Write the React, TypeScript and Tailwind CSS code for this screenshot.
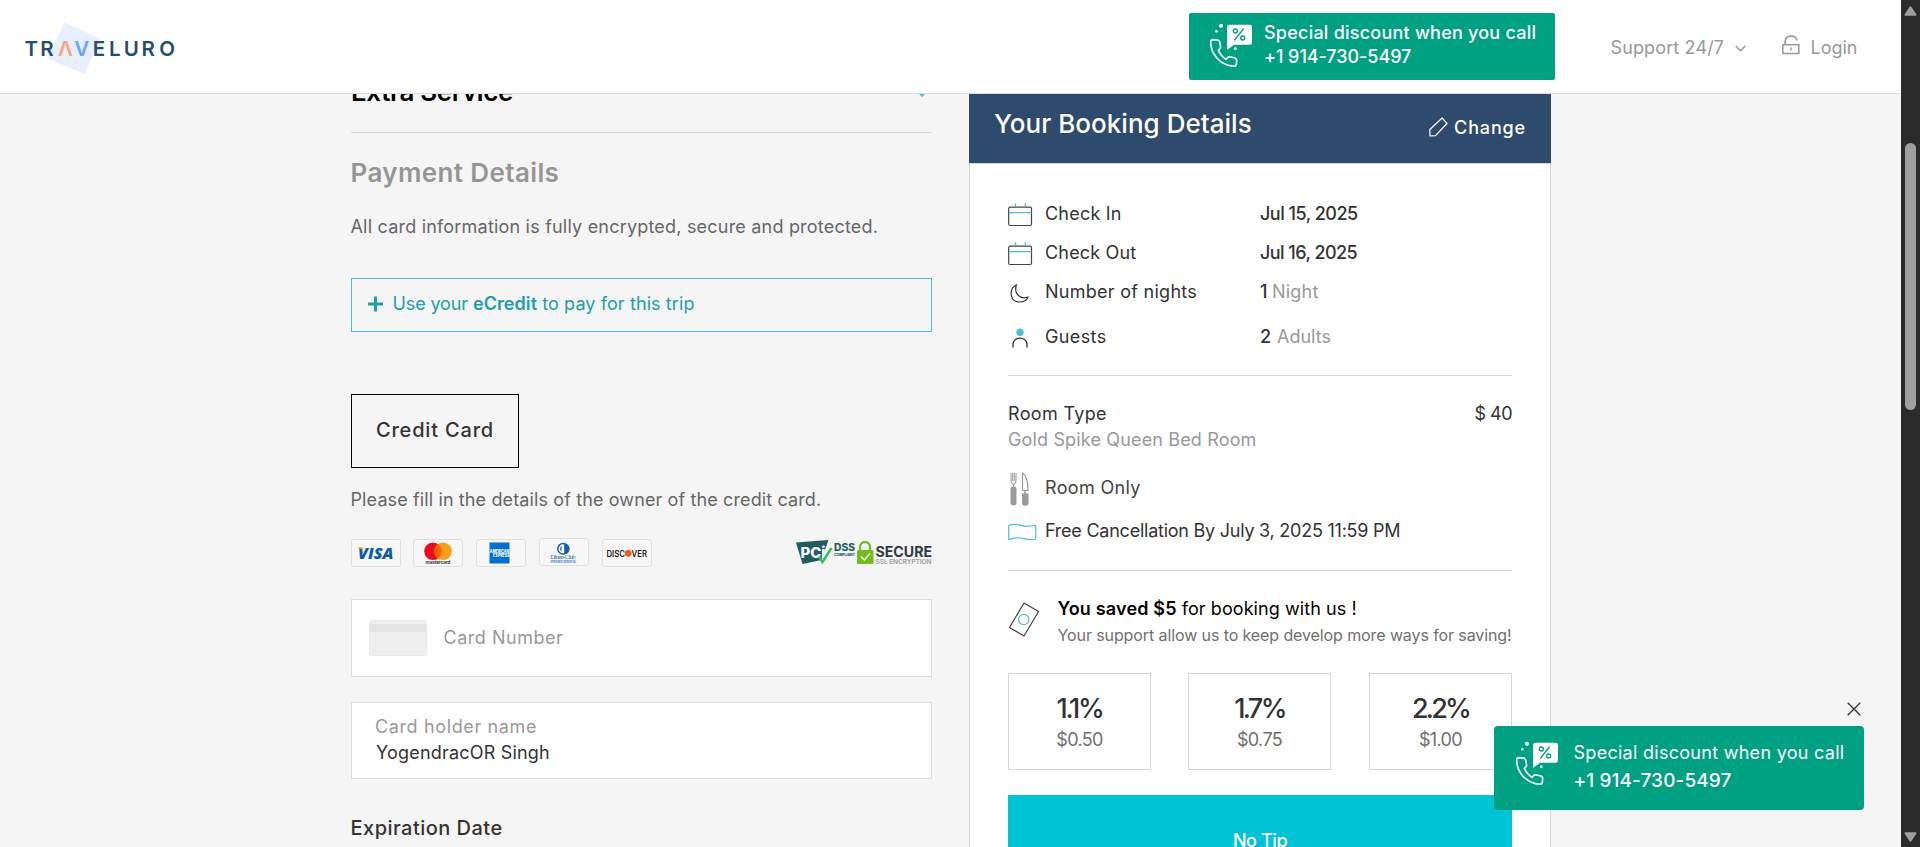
import React from "react";

function CallIcon({ className }: { className?: string }) {
  return (
    <svg viewBox="0 0 126 132" className={className} fill="none">
      <path
        d="M2 57 Q2 50 9 50 L23 51 Q28 52 29 57 L32 73 Q32 77 25 82 Q31 98 48 109 Q54 101 59 101 L75 105 Q80 107 80 112 L79 124 Q78 130 71 130 C30 126 2 93 2 57 Z"
        stroke="white"
        strokeWidth="4.8"
        strokeLinejoin="round"
      />
      <path d="M58 5 H120 Q126 5 126 12 V58 Q126 65 120 65 H72 L51 81 V12 Q51 5 58 5 Z" fill="white" />
      <circle cx="33" cy="8" r="6" fill="white" />
      <circle cx="19" cy="25" r="4" fill="white" />
      <circle cx="76" cy="77" r="4" fill="white" />
      <circle cx="76" cy="24" r="6" stroke="#00a082" strokeWidth="4" />
      <circle cx="98" cy="45" r="6" stroke="#00a082" strokeWidth="4" />
      <path d="M100 18 L74 51" stroke="#00a082" strokeWidth="4" strokeLinecap="round" />
    </svg>
  );
}

function Logo() {
  return (
    <svg width="152" height="54" viewBox="24 21 152 54" className="ml-6 mt-[21px] shrink-0">
      <path d="M65 23.500 L99 39.500 L84 72.500 L49.500 58.500 Z" fill="#e6f0ff" stroke="#e6f0ff" strokeWidth="2" strokeLinejoin="round" />
      <text y="56" fontFamily="Inter, sans-serif" fontSize="20.500" fontWeight="600" fill="#254d73">
        <tspan x="24.500">T</tspan>
        <tspan x="40.200">R</tspan>
        <tspan x="58" fill="#ffa477">Λ</tspan>
        <tspan x="74.300" fill="#64a8ff">V</tspan>
        <tspan x="92.800">E</tspan>
        <tspan x="109">L</tspan>
        <tspan x="123.800">U</tspan>
        <tspan x="141.500">R</tspan>
        <tspan x="159.300">O</tspan>
      </text>
    </svg>
  );
}

function Calendar() {
  return (
    <svg width="25" height="24" viewBox="0 0 25 24" fill="none">
      <rect x="0.700" y="4.200" width="22.800" height="18.300" rx="1.500" stroke="#444" strokeWidth="1.200" />
      <path d="M1 9.700 H23.500 M7.500 0.300 V4 M17.300 0.300 V4" stroke="#4dbfcd" strokeWidth="1.300" />
    </svg>
  );
}

function Moon() {
  return (
    <svg width="19" height="19" viewBox="0 0 19 19" fill="none" className="ml-[2px]">
      <path d="M6.500 0.800 C-1.500 5 -0.500 18 9.800 18 C14 18 16.800 15.800 18.200 13 C9.500 16 3.500 9 6.500 0.800 Z" stroke="#333" strokeWidth="1.200" strokeLinejoin="round" />
    </svg>
  );
}

function Guest() {
  return (
    <svg width="16" height="20" viewBox="0 0 16 20" fill="none" className="ml-1">
      <circle cx="8" cy="4.300" r="3.700" fill="#4dbfcd" />
      <path d="M1 19.500 V16.500 C1 8 15 8 15 16.500 V19.500" stroke="#333" strokeWidth="1.300" />
    </svg>
  );
}

function Cutlery() {
  return (
    <svg width="19" height="34" viewBox="0 0 19 34" fill="none" className="ml-[2px]">
      <path d="M1 1 V9 Q1 12 3.500 12 Q6 12 6 9 V1 M2.700 1 V9 M4.300 1 V9" stroke="#9a9a9a" strokeWidth="1" />
      <path d="M3.500 12 V15" stroke="#9a9a9a" strokeWidth="1.500" />
      <rect x="0.500" y="14.500" width="6" height="19" rx="3" fill="#9a9a9a" />
      <path d="M12.500 1 C16.500 3.500 18 8 18 18.500 H12.500 Z" stroke="#9a9a9a" strokeWidth="1.200" />
      <path d="M15 18.500 V22" stroke="#9a9a9a" strokeWidth="1.500" />
      <path d="M12 21.500 H18.500 V30.500 A3.200 3.200 0 0 1 12 30.500 Z" fill="#9a9a9a" />
    </svg>
  );
}

function Flag() {
  return (
    <svg width="29" height="18" viewBox="0 0 29 18" fill="none">
      <path d="M0.700 2.500 C8 -1 14 4 20 3.200 Q25 2.500 27.800 2.500 V16 C20 18.500 15 14 8.500 14.800 Q4 15.500 0.700 16.500 Z" stroke="#4dbfcd" strokeWidth="1.200" strokeLinejoin="round" />
    </svg>
  );
}

function Banknote() {
  return (
    <svg width="32" height="35" viewBox="0 0 32 35" fill="none" className="shrink-0">
      <path d="M16 1 L30.500 9.500 L16 34 L1.500 25.500 Z" stroke="#444" strokeWidth="1.200" />
      <circle cx="15.800" cy="17.500" r="5.200" stroke="#4dbfcd" strokeWidth="1.200" />
    </svg>
  );
}

function CardFrame({ children, className = "" }: { children: React.ReactNode; className?: string }) {
  return (
    <span className={`block h-7 w-[50px] rounded-[3px] border border-[#dfdfdf] bg-[#f7f7f7] ${className}`}>
      <svg width="48" height="26" viewBox="0 0 48 26">
        {children}
      </svg>
    </span>
  );
}

function PaymentLogos() {
  return (
    <div className="flex h-7">
      <CardFrame>
        <text x="6" y="19" fontFamily="Open Sans, sans-serif" fontSize="16.500" fontWeight="800" fontStyle="italic" fill="#0c5ca8" textLength="35.500" lengthAdjust="spacingAndGlyphs">VISA</text>
        <path d="M5.500 7.300 H10 L12 11.500 Q9 8.500 5.500 7.300 Z" fill="#f5a11c" />
      </CardFrame>
      <CardFrame className="ml-3">
        <circle cx="19" cy="11.300" r="8.800" fill="#eb0b1f" />
        <circle cx="29" cy="11.300" r="8.800" fill="#f79e1b" />
        <path d="M24 4.100 A8.800 8.800 0 0 1 24 18.500 A8.800 8.800 0 0 1 24 4.100 Z" fill="#ff5f00" />
        <text x="11.500" y="24.300" fontFamily="Inter, sans-serif" fontSize="4.600" fontWeight="700" fill="#333" textLength="25">mastercard</text>
      </CardFrame>
      <CardFrame className="ml-[13px]">
        <rect x="12.500" y="2.500" width="20" height="21" fill="#0070d1" />
        <text x="12.800" y="12.500" fontFamily="Inter, sans-serif" fontSize="4.500" fontWeight="800" fill="white" textLength="19.500" lengthAdjust="spacingAndGlyphs">AMERICAN</text>
        <text x="16" y="17.300" fontFamily="Inter, sans-serif" fontSize="4.500" fontWeight="800" fill="white" textLength="16.500" lengthAdjust="spacingAndGlyphs">EXPRESS</text>
      </CardFrame>
      <CardFrame className="-mt-px ml-[13px]">
        <circle cx="23" cy="9.800" r="5.200" fill="white" stroke="#1a5ca8" strokeWidth="1.500" />
        <path d="M24.200 4.300 A5.500 5.500 0 0 1 24.200 15.300 Z" fill="#1a5ca8" />
        <path d="M21.500 6.800 A4 4 0 0 0 21.500 12.800 Z" fill="#1a5ca8" />
        <text x="10.500" y="20.300" fontFamily="Liberation Serif, serif" fontSize="6.500" fill="#2b68b0" textLength="25">Diners Club</text>
        <text x="10.500" y="23.500" fontFamily="Liberation Serif, serif" fontSize="3.200" fontWeight="700" fill="#2b68b0" textLength="26">INTERNATIONAL</text>
      </CardFrame>
      <CardFrame className="ml-[13px]">
        <text x="3.500" y="16.700" fontFamily="Inter, sans-serif" fontSize="9.500" fontWeight="600" fill="#222" textLength="18.500" lengthAdjust="spacingAndGlyphs">DISC</text>
        <circle cx="25.200" cy="13.300" r="3.400" fill="#ee5a1c" />
        <text x="28.500" y="16.700" fontFamily="Inter, sans-serif" fontSize="9.500" fontWeight="600" fill="#222" textLength="15.500" lengthAdjust="spacingAndGlyphs">VER</text>
      </CardFrame>
      <svg width="136" height="27" viewBox="0 0 136 27" className="ml-auto mt-px">
        <path d="M0 2.500 L32.500 0 L25.500 20 L6.500 24 Z" fill="#215c63" />
        <text x="4.500" y="17.500" fontFamily="Inter, sans-serif" fontSize="15" fontWeight="800" fill="white" textLength="25" lengthAdjust="spacingAndGlyphs">PCi</text>
        <path d="M23 17 L26.500 22 L35.500 8" stroke="#2fc35a" strokeWidth="2.500" fill="none" />
        <text x="38" y="11" fontFamily="Inter, sans-serif" fontSize="10" fontWeight="800" fill="#215c63" textLength="21" lengthAdjust="spacingAndGlyphs">DSS</text>
        <text x="38" y="15.500" fontFamily="Inter, sans-serif" fontSize="3.500" fontWeight="800" fill="#215c63" textLength="21" lengthAdjust="spacingAndGlyphs">COMPLIANT</text>
        <path d="M64 11 V7 A5 5 0 0 1 74 7 V11" stroke="#76bc21" strokeWidth="2.300" fill="none" />
        <rect x="61" y="10" width="16.500" height="14" rx="1.500" fill="#76bc21" />
        <path d="M65 16.500 L68.300 20 L74 13.500" stroke="white" strokeWidth="1.300" fill="none" />
        <text x="79.500" y="16.800" fontFamily="Inter, sans-serif" fontSize="14" fontWeight="700" fill="#2d3b44" textLength="56.500" lengthAdjust="spacingAndGlyphs">SECURE</text>
        <text x="79.500" y="23.700" fontFamily="Inter, sans-serif" fontSize="6.800" fontWeight="600" fill="#999" textLength="56" lengthAdjust="spacingAndGlyphs">SSL ENCRYPTION</text>
      </svg>
    </div>
  );
}

function Header() {
  return (
    <header className="relative z-10 flex h-[94px] shrink-0 items-start border-b border-[#dedede] bg-white">
      <Logo />
      <div className="ml-[1013px] mt-[13px] flex h-[67px] w-[366px] shrink-0 rounded-[2px] bg-[#00a082] text-white">
        <CallIcon className="ml-[21px] mt-2.5 h-[44px] w-[42px]" />
        <div className="ml-[12px] mt-[7px] text-[18px] font-medium">
          <p className="leading-[25px] tracking-[0.23px]">Special discount when you call</p>
          <p className="leading-6 tracking-[-0.06px]">+1 914-730-5497</p>
        </div>
      </div>
      <nav className="ml-[55.500px] mt-[36px] flex items-center text-[18px] leading-6 text-[#999]">
        <span className="w-[114px] tracking-[0.13px]">Support 24/7</span>
        <svg width="11" height="7" viewBox="0 0 11 7" fill="none" className="ml-[10px]">
          <path d="M0.700 1 L5.500 5.800 L10.300 1" stroke="#999" strokeWidth="1.400" />
        </svg>
        <svg width="18" height="20" viewBox="0 0 18 20" fill="none" className="-mt-[7px] ml-[36px]">
          <rect x="0.900" y="9.700" width="16" height="8.800" stroke="#999" strokeWidth="1.500" />
          <path d="M3.200 9.500 V6.500 C3.500 -0.500 14.500 -0.500 15 5.500" stroke="#999" strokeWidth="1.800" />
          <path d="M9 12.500 V15.500" stroke="#999" strokeWidth="1.500" />
        </svg>
        <span className="ml-[11px]">Login</span>
      </nav>
    </header>
  );
}

function PaymentForm() {
  return (
    <section className="ml-[351px] w-[581px] shrink-0 text-[18px] leading-6 text-[#666]">
      <div className="-mt-[18px] flex justify-between">
        <h2 className="text-[26px] font-semibold leading-8 tracking-[-0.41px] text-black">Extra Service</h2>
        <svg width="16" height="10" viewBox="0 0 16 10" fill="none" className="mr-[2px] mt-[11px]">
          <path d="M1 1 L8 8 L15 1" stroke="#4dbfcd" strokeWidth="3" />
        </svg>
      </div>
      <hr className="mt-[24px] border-[#d9d9d9]" />
      <h2 className="-ml-[0.500px] mt-[24px] text-[26px] font-semibold leading-8 tracking-[0.38px] text-[#959595]">Payment Details</h2>
      <p className="-ml-[0.500px] mt-[26px] whitespace-nowrap tracking-[0.2px]">All card information is fully encrypted, secure and protected.</p>
      <button className="mt-[39px] flex h-[54px] w-full items-center border border-[#4dbfcd] pb-0.5 pl-4 text-[#1c9fb0]">
        <svg width="15" height="16" viewBox="0 0 15 16" className="mr-[9.500px]">
          <path d="M7.500 0.500 V15.500 M0 8 H15" stroke="#1c9fb0" strokeWidth="3" />
        </svg>
        <span className="whitespace-pre">
          <span className="tracking-[-0.12px]">Use your </span>
          <b className="font-semibold tracking-[0.08px]">eCredit</b>
          <span className="tracking-[0.1px]"> to pay for this trip</span>
        </span>
      </button>
      <button className="mt-[62px] flex h-[74px] w-[168px] items-center justify-center border border-black pb-0.5 text-[20px] font-medium tracking-[0.82px] text-[#333]">
        Credit Card
      </button>
      <p className="-ml-[0.500px] mb-[27px] mt-5 whitespace-nowrap tracking-[0.12px]">Please fill in the details of the owner of the credit card.</p>
      <PaymentLogos />
      <div className="mt-8 flex h-[78px] items-center border border-[#ddd] bg-white pl-[17px] text-[#999]">
        <span className="block h-9 w-[58px] rounded-[3px] border border-[#e8e8e8] bg-[#efefef] pt-[3px]">
          <span className="block h-2 bg-[#e4e4e4]" />
        </span>
        <span className="ml-[16.500px] tracking-[0.52px]">Card Number</span>
      </div>
      <div className="mt-[25px] h-[77px] border border-[#ddd] bg-white pl-[23px] pt-[12px]">
        <p className="tracking-[0.63px] text-[#999]">Card holder name</p>
        <p className="mt-[2px] pl-px tracking-[0.19px] text-[#333]">YogendracOR Singh</p>
      </div>
      <h3 className="-ml-[0.500px] mt-[37px] text-[20px] font-medium tracking-[0.47px] text-[#333]">Expiration Date</h3>
    </section>
  );
}

function StayRow({ icon, label, children, className, tracking }: { icon: React.ReactNode; label: string; children: React.ReactNode; className: string; tracking: string }) {
  return (
    <div className={`flex h-6 ${className}`}>
      <span className="flex w-[37px] items-center pt-0.5">{icon}</span>
      <span className={`w-[215px] ${tracking}`}>{label}</span>
      {children}
    </div>
  );
}

function Tip({ percent, amount, className }: { percent: string; amount: string; className: string }) {
  return (
    <div className="h-[97px] w-[143px] border border-[#d6d6d6] pt-[17px] text-center">
      <p className={`text-[27px] font-medium leading-9 text-[#333] ${className}`}>{percent}</p>
      <p className="mt-[1px] tracking-[-0.63px] text-[#707070]">{amount}</p>
    </div>
  );
}

function BookingDetails() {
  return (
    <section className="ml-[37px] h-[780px] w-[582px] shrink-0 bg-white text-[18px] leading-6 text-[#333]">
      <div className="flex h-[69px] justify-between bg-[#2e4a6d] pl-[25px] pr-[25px] text-white">
        <h2 className="mt-[14px] text-[26px] font-medium leading-8 tracking-[0.02px]">Your Booking Details</h2>
        <div className="mt-[22px] flex font-medium tracking-[0.85px]">
          <svg width="19" height="20" viewBox="0 0 19 20" fill="none" className="mr-[6px] mt-[1px]">
            <path d="M13.200 1 L18 6.500 L6.500 18.600 L1 19 L0.800 12.500 Z" stroke="white" strokeWidth="1.200" strokeLinejoin="round" />
          </svg>
          Change
        </div>
      </div>
      <div className="h-[711px] border border-[#d6d6d6] px-[38px]">
        <StayRow className="mt-[38px]" icon={<Calendar />} label="Check In" tracking="tracking-[0.21px]">
          <span className="font-medium tracking-[-0.5px]">Jul 15, 2025</span>
        </StayRow>
        <StayRow className="mt-[15px]" icon={<Calendar />} label="Check Out" tracking="tracking-[0.17px]">
          <span className="font-medium tracking-[-0.55px]">Jul 16, 2025</span>
        </StayRow>
        <StayRow className="mt-[15px]" icon={<Moon />} label="Number of nights" tracking="tracking-[0.27px]">
          <span className="w-[12px] font-medium">1</span>
          <span className="tracking-[0.22px] text-[#999]">Night</span>
        </StayRow>
        <StayRow className="mt-[21px]" icon={<Guest />} label="Guests" tracking="tracking-[0.38px]">
          <span className="w-[17px] font-medium">2</span>
          <span className="text-[#999]">Adults</span>
        </StayRow>
        <hr className="mt-[26px] border-[#d6d6d6]" />
        <div className="mt-[26px] flex justify-between">
          <span className="tracking-[0.33px]">Room Type</span>
          <span className="tracking-[-0.5px]">$ 40</span>
        </div>
        <p className="mt-[2px] tracking-[0.15px] text-[#999]">Gold Spike Queen Bed Room</p>
        <div className="mt-[24px] flex h-6 items-center text-[#444]">
          <span className="-my-2 flex w-[37px] items-center pt-0.5"><Cutlery /></span>
          <span className="tracking-[0.34px]">Room Only</span>
        </div>
        <div className="mt-[19px] flex h-6 items-center">
          <span className="flex w-[37px] pt-px"><Flag /></span>
          <span className="tracking-[-0.24px]">Free Cancellation By July 3, 2025 11:59 PM</span>
        </div>
        <hr className="mt-[27px] border-[#d6d6d6]" />
        <div className="mt-[26px] flex whitespace-nowrap">
          <span className="mt-[5px] w-[49.500px] shrink-0"><Banknote /></span>
          <div>
            <p className="text-black"><b className="font-semibold tracking-[0.17px]">You saved $5</b> <span className="tracking-[0.07px]">for booking with us !</span></p>
            <p className="mt-[2px] text-[16px] tracking-[-0.1px] text-[#707070]">Your support allow us to keep develop more ways for saving!</p>
          </div>
        </div>
        <div className="mt-[26px] flex">
          <Tip percent="1.1%" amount="$0.50" className="tracking-[-2.3px]" />
          <div className="ml-[37px] mr-[38px]">
            <Tip percent="1.7%" amount="$0.75" className="tracking-[-2.6px]" />
          </div>
          <Tip percent="2.2%" amount="$1.00" className="tracking-[-2.8px]" />
        </div>
        <button className="mt-[25px] block h-[92px] w-full bg-[#00c3d6] text-center font-medium tracking-[-0.41px] text-white">No Tip</button>
      </div>
    </section>
  );
}

function CallPopup() {
  return (
    <aside className="absolute left-[1494px] top-[702px] z-20 w-[370px]">
      <svg width="14" height="14" viewBox="0 0 14 14" className="ml-auto mr-[3px]">
        <path d="M0.700 0.700 L13.300 13.300 M13.300 0.700 L0.700 13.300" stroke="#333" strokeWidth="1.300" />
      </svg>
      <div className="mt-[10px] flex h-[84px] rounded-[4px] bg-[#00a082] text-white">
        <CallIcon className="ml-[22px] mt-[15px] h-[44px] w-[42px]" />
        <div className="ml-[15.500px] mt-[15px] whitespace-nowrap">
          <p className="text-[18px] leading-6 tracking-[0.28px]">Special discount when you call</p>
          <p className="mt-[4px] text-[19px] font-medium leading-6 tracking-[0.1px]">+1 914-730-5497</p>
        </div>
      </div>
    </aside>
  );
}

function Scrollbar() {
  return (
    <div className="flex w-[19px] shrink-0 flex-col items-center bg-[#2b2b2b]">
      <svg width="13" height="10" viewBox="0 0 13 10" className="mt-1.5">
        <path d="M6.500 1 L11.800 9 H1.200 Z" fill="#9f9f9f" stroke="#9f9f9f" strokeWidth="1.500" strokeLinejoin="round" />
      </svg>
      <div className="mt-[127px] h-[267px] w-[11px] rounded-full bg-[#9f9f9f]" />
      <svg width="13" height="10" viewBox="0 0 13 10" className="mb-[5px] mt-auto">
        <path d="M6.500 9 L11.800 1 H1.200 Z" fill="#9f9f9f" stroke="#9f9f9f" strokeWidth="1.500" strokeLinejoin="round" />
      </svg>
    </div>
  );
}

export default function App() {
  return (
    <div className="relative flex h-[847px] w-[1920px] overflow-hidden bg-[#f5f5f5] font-['Inter',sans-serif]">
      <div className="flex w-[1901px] shrink-0 flex-col">
        <Header />
        <main className="flex items-start">
          <PaymentForm />
          <BookingDetails />
        </main>
      </div>
      <Scrollbar />
      <CallPopup />
    </div>
  );
}
